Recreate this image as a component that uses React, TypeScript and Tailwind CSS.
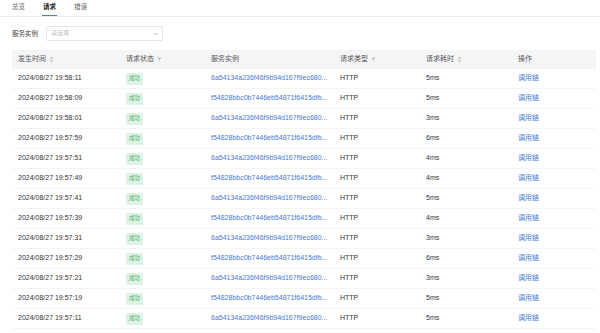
import React from 'react';

// 实例 ID 在列表中按原样缩略显示
const A = '6a54134a236f46f9b94d167f9ec680...';
const B = 'f54828bbc0b7446eb54871f6415dfb...';

const rows = [
  { time: '2024/08/27 19:58:11', inst: A, cost: '5ms' },
  { time: '2024/08/27 19:58:09', inst: B, cost: '5ms' },
  { time: '2024/08/27 19:58:01', inst: A, cost: '3ms' },
  { time: '2024/08/27 19:57:59', inst: B, cost: '6ms' },
  { time: '2024/08/27 19:57:51', inst: A, cost: '4ms' },
  { time: '2024/08/27 19:57:49', inst: B, cost: '4ms' },
  { time: '2024/08/27 19:57:41', inst: A, cost: '5ms' },
  { time: '2024/08/27 19:57:39', inst: B, cost: '4ms' },
  { time: '2024/08/27 19:57:31', inst: A, cost: '3ms' },
  { time: '2024/08/27 19:57:29', inst: B, cost: '6ms' },
  { time: '2024/08/27 19:57:21', inst: A, cost: '3ms' },
  { time: '2024/08/27 19:57:19', inst: B, cost: '5ms' },
  { time: '2024/08/27 19:57:11', inst: A, cost: '5ms' },
];

const font = { fontFamily: '"Liberation Sans", "Noto Sans CJK SC", sans-serif' };

const SortIcon = () => (
  <svg width="5" height="7" viewBox="0 0 5 7" className="ml-[3px] inline-block">
    <path d="M2.5 0.5 L4.5 2.8 H0.5 Z" fill="#c4c4c4" />
    <path d="M2.5 6.5 L4.5 4.2 H0.5 Z" fill="#c4c4c4" />
  </svg>
);

const FilterIcon = () => (
  <svg width="5" height="5" viewBox="0 0 5 5" className="ml-[3px] inline-block">
    <path d="M0.3 0.5 H4.7 L3 2.6 V4.5 L2 4 V2.6 Z" fill="#c4c4c4" />
  </svg>
);

const cols = 'grid grid-cols-[108px_85px_129px_86px_92px_1fr] items-center';

export default function App() {
  return (
    <div className="w-[600px] h-[333px] overflow-hidden bg-white text-[7px] text-[#333]" style={font}>
      {/* tabs */}
      <div className="flex h-[17px] border-b border-[#eeeeee] px-3 gap-[18px] text-[6.5px] text-[#666]">
        <div className="pt-[2px]">总览</div>
        <div className="pt-[2px] text-[#222] font-bold relative">
          请求
          <div className="absolute left-[-1px] right-[-1px] bottom-[0px] h-[1.5px] bg-[#4b7be5]" />
        </div>
        <div className="pt-[2px]">错误</div>
      </div>

      {/* filter */}
      <div className="flex items-center px-3 pt-[9px] gap-2 text-[6.5px] text-[#444]">
        <span>服务实例</span>
        <div className="w-[117px] h-[15px] border border-[#e6e6e6] rounded-[2px] flex items-center justify-between px-[4px]">
          <span className="text-[#c2c2c2] text-[6px]">请选择</span>
          <svg width="5" height="4" viewBox="0 0 5 4">
            <path d="M0.7 1 L2.5 3 L4.3 1" stroke="#aaa" strokeWidth="0.8" fill="none" />
          </svg>
        </div>
      </div>

      {/* table */}
      <div className="ml-3 w-[584px] mt-[9px]">
        <div className={`${cols} h-[19px] bg-[#f4f5f7] text-[#555] px-[6px]`}>
          <div className="flex items-center">发生时间<SortIcon /></div>
          <div className="flex items-center">请求状态<FilterIcon /></div>
          <div>服务实例</div>
          <div className="flex items-center">请求类型<FilterIcon /></div>
          <div className="flex items-center">请求耗时<SortIcon /></div>
          <div>操作</div>
        </div>
        {rows.map((r, i) => (
          <div key={i} className={`${cols} h-[20px] border-b border-[#f5f5f5] px-[6px]`}>
            <div>{r.time}</div>
            <div>
              <span className="inline-flex items-center h-[12px] px-[3px] bg-[#dcf3e3] text-[#4caf6e] text-[5.5px] rounded-[1px]">成功</span>
            </div>
            <div className="text-[#4a78d6] whitespace-nowrap">{r.inst}</div>
            <div>HTTP</div>
            <div>{r.cost}</div>
            <div className="text-[#4a78d6]">调用链</div>
          </div>
        ))}
      </div>
    </div>
  );
}
